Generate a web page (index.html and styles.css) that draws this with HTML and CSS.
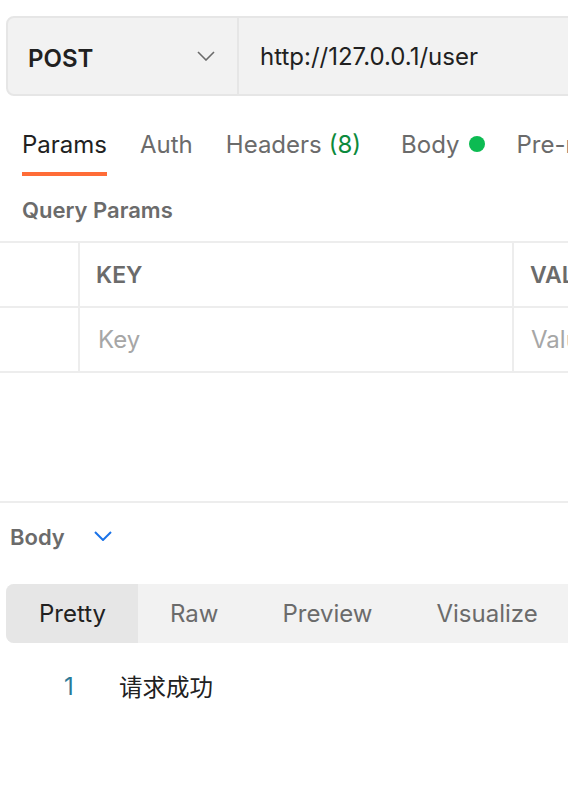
FILE: index.html
```html
<!DOCTYPE html>
<html lang="zh">
<head>
<meta charset="utf-8">
<link rel="stylesheet" href="styles.css">
</head>
<body>
<div class="page">
  <div class="urlbar">
    <div class="method">
      <span class="method-name">POST</span>
      <svg class="chev" width="18" height="10" viewBox="0 0 18 10"><path d="M1 1 L9 9 L17 1" fill="none" stroke="#6b6b6b" stroke-width="1.6"/></svg>
    </div>
    <div class="url">http://127.0.0.1/user</div>
  </div>

  <div class="tabs">
    <div class="tab active"><span class="tab-label">Params</span></div>
    <div class="tab"><span class="tab-label">Auth</span></div>
    <div class="tab tab-headers"><span class="tab-label">Headers<span class="count">(8)</span></span></div>
    <div class="tab"><span class="tab-label">Body<span class="dot"></span></span></div>
    <div class="tab"><span class="tab-label">Pre-request Script</span></div>
  </div>

  <div class="section-title">Query Params</div>

  <div class="table">
    <div class="row head">
      <div class="cell c1"></div>
      <div class="cell c2">KEY</div>
      <div class="cell c3">VALUE</div>
    </div>
    <div class="row">
      <div class="cell c1"></div>
      <div class="cell c2 ph">Key</div>
      <div class="cell c3 ph">Value</div>
    </div>
  </div>

  <div class="response">
    <div class="resp-head">
      <span class="resp-title">Body</span>
      <svg class="chev-blue" width="18" height="10" viewBox="0 0 18 10"><path d="M1 1 L9 9 L17 1" fill="none" stroke="#1a73e8" stroke-width="2"/></svg>
    </div>
    <div class="segment">
      <div class="seg active">Pretty</div>
      <div class="seg">Raw</div>
      <div class="seg">Preview</div>
      <div class="seg">Visualize</div>
    </div>
    <div class="code">
      <span class="ln">1</span>
      <span class="txt">请求成功</span>
    </div>
  </div>
</div>
</body>
</html>
```

FILE: styles.css
```css
* { box-sizing: border-box; }
html, body { margin: 0; padding: 0; background: #ffffff; }
body {
  width: 568px;
  height: 790px;
  overflow: hidden;
  font-family: Inter, "Noto Sans", "Noto Sans CJK SC", sans-serif;
  color: #212121;
}
.page { width: 568px; overflow: hidden; }

/* URL bar */
.urlbar {
  margin: 16px 0 0 6px;
  width: 640px;
  height: 80px;
  display: flex;
  background: #f2f2f2;
  border: 2px solid #e6e6e6;
  border-radius: 8px;
}
.method {
  width: 231px;
  flex: none;
  display: flex;
  align-items: center;
  justify-content: space-between;
  padding: 0 22px 0 20px;
  border-right: 2px solid #e6e6e6;
}
.method-name {
  font-size: 24px;
  font-weight: 600;
  color: #212121;
  padding-top: 4px;
}
.chev { display: block; }
.url {
  display: flex;
  align-items: center;
  padding-left: 21px;
  font-size: 24px;
  color: #212121;
  white-space: nowrap;
}

/* Tabs */
.tabs {
  display: flex;
  margin-top: 31px;
  padding-left: 22px;
  white-space: nowrap;
}
.tab {
  font-size: 24px;
  color: #6b6b6b;
  margin-right: 33px;
  padding-bottom: 11px;
  border-bottom: 4px solid transparent;
}
.tab-label {
  display: flex;
  align-items: center;
  height: 34px;
}
.tab.active {
  color: #212121;
  border-bottom-color: #ff6c37;
}
.tab-headers { margin-right: 40px; }
.count { color: #0c8a3c; margin-left: 7px; }
.dot {
  width: 16px;
  height: 16px;
  border-radius: 50%;
  background: #0cbb52;
  margin-left: 9px;
  margin-right: -1px;
}

.section-title {
  margin-top: 17px;
  padding-left: 22px;
  font-size: 22px;
  font-weight: 600;
  color: #6b6b6b;
  height: 48px;
  line-height: 34px;
}

/* Params table */
.table {
  border-top: 2px solid #ededed;
}
.row {
  display: flex;
  height: 65px;
  border-bottom: 2px solid #ededed;
}
.cell {
  display: flex;
  align-items: center;
  white-space: nowrap;
  overflow: hidden;
}
.c1 { width: 80px; border-right: 2px solid #ededed; flex: none; }
.c2 { width: 434px; border-right: 2px solid #ededed; flex: none; padding-left: 16px; }
.c3 { flex: none; width: 200px; padding-left: 16px; }
.head .cell { font-size: 23px; font-weight: 600; color: #6b6b6b; }
.ph { font-size: 24px; color: #a6a6a6; padding-left: 18px; }
.c3.ph { padding-left: 17px; }

/* Response */
.response {
  margin-top: 128px;
  border-top: 2px solid #ededed;
}
.resp-head {
  display: flex;
  align-items: center;
  height: 68px;
  padding-left: 10px;
}
.resp-title {
  font-size: 22px;
  font-weight: 600;
  color: #6b6b6b;
  margin-right: 29px;
}
.chev-blue { display: block; margin-top: -2px; }
.segment {
  margin: 13px 0 0 6px;
  width: 620px;
  height: 59px;
  display: flex;
  background: #f2f2f2;
  border-radius: 8px;
  overflow: hidden;
}
.seg {
  font-size: 24px;
  color: #6b6b6b;
  display: flex;
  align-items: center;
  padding: 0 32px;
}
.seg.active {
  background: #e6e6e6;
  color: #212121;
  padding: 0 32px 0 33px;
}
.code {
  display: flex;
  align-items: center;
  height: 86px;
}
.ln {
  color: #2b7a98;
  width: 119px;
  padding-left: 64px;
  font-size: 24px;
  font-family: Inter, sans-serif;
}
.txt {
  font-size: 23.5px;
  font-family: "Noto Sans CJK SC", sans-serif;
  color: #212121;
}
```
